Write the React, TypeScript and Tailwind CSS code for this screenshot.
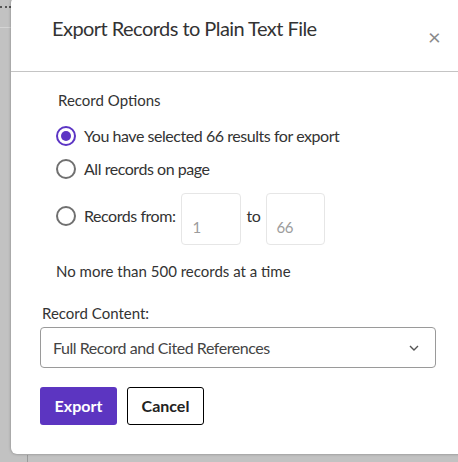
import React from "react";

const font = { fontFamily: "'Source Sans Pro', Lato, 'Liberation Sans', sans-serif" };

const Radio = ({ checked }: { checked?: boolean }) => (
  <span
    className={
      "flex h-5 w-5 shrink-0 items-center justify-center rounded-full border-2 " +
      (checked ? "border-[#5c35c4]" : "border-[#707070]")
    }
  >
    {checked && <span className="h-[10px] w-[10px] rounded-full bg-[#5c35c4]" />}
  </span>
);

export default function App() {
  return (
    <div className="relative h-[462px] w-[458px] overflow-hidden bg-[#c2c2c2]" style={font}>
      {/* page behind the dialog */}
      <div className="absolute left-0 top-[6px] w-[11px] border-t-2 border-dotted border-[#555]" />
      <div className="absolute left-0 top-[27px] h-px w-[11px] bg-[#d4d4d4]" />
      <div className="absolute left-[27px] top-[455px] h-[10px] w-px bg-[#9a9a9a]" />

      {/* dialog */}
      <div className="absolute left-[11px] top-[-3px] h-[457px] w-[470px] rounded-md bg-white shadow-[0_0_3px_rgba(0,0,0,0.35)]">
        <div className="relative flex h-[75px] items-start border-b border-[#c4c4c4] pl-[41px] pt-[17px]">
          <h2 className="text-[20px] leading-[28px] tracking-[-0.55px] text-[#333]">Export Records to Plain Text File</h2>
          <span className="absolute left-[417px] top-[31px] text-[22px] leading-[18px] text-[#8a8a8a]">×</span>
        </div>

        <div className="pl-[45px] pt-[17px]">
          <div className="pl-[2px] text-[15px] leading-[22px] text-[#333]">Record Options</div>
          <div className="mt-[14px] flex flex-col text-[16px] tracking-[-0.45px] text-[#333]">
            <label className="flex h-[22px] items-center gap-[8px]">
              <Radio checked />
              <span>You have selected 66 results for export</span>
            </label>
            <label className="mt-[11px] flex h-[22px] items-center gap-[8px]">
              <Radio />
              <span>All records on page</span>
            </label>
            <div className="mt-[13px] flex items-start">
              <label className="mt-[12px] flex h-[22px] items-center gap-[8px]">
                <Radio />
                <span>Records from:</span>
              </label>
              <div className="ml-[5px] flex h-[52px] w-[60px] items-center rounded border border-[#e6e6e6] pl-[11px] pt-[16px] text-[15px] text-[#9c9c9c]">
                1
              </div>
              <span className="ml-[6px] mt-[12px] leading-[22px]">to</span>
              <div className="ml-[6px] flex h-[52px] w-[59px] items-center rounded border border-[#e6e6e6] pl-[9px] pt-[16px] text-[15px] text-[#9c9c9c]">
                66
              </div>
            </div>
            <div className="mt-[15px] text-[15px] leading-[22px] tracking-normal">No more than 500 records at a time</div>
          </div>
        </div>

        <div className="pl-[29px] pr-[23px] pt-[20px]">
          <div className="pl-[2px] text-[15px] leading-[22px] text-[#333]">Record Content:</div>
          <div className="mt-[3px] flex h-[41px] w-[396px] items-center justify-between rounded border border-[#9a9a9a] pl-[12px] pr-[16px] text-[16px] tracking-[-0.45px] text-[#444]">
            <span>Full Record and Cited References</span>
            <svg width="10" height="6" viewBox="0 0 10 6" fill="none">
              <path d="M1 1l4 4 4-4" stroke="#555" strokeWidth="1.4" />
            </svg>
          </div>
          <div className="mt-[19px] flex gap-[10px]">
            <button className="h-[38px] w-[77px] rounded-[3px] bg-[#5c35c1] text-[16px] font-bold text-white">Export</button>
            <button className="h-[38px] w-[77px] rounded-[3px] border border-black bg-white text-[16px] font-bold text-[#222]">Cancel</button>
          </div>
        </div>
      </div>
    </div>
  );
}
